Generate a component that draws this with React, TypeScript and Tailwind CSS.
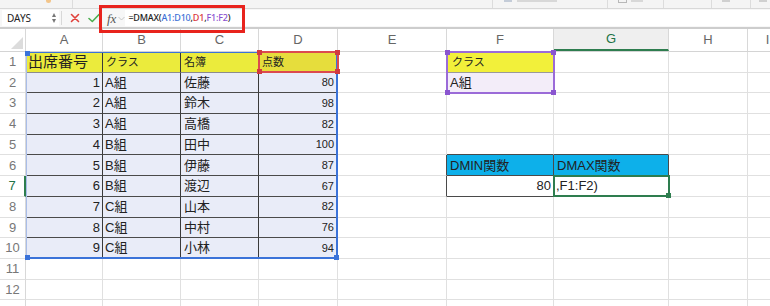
const ROWH = "h-[20.7px]";

const cols = [
    { key: "A", w: "w-[77px]" },
    { key: "B", w: "w-[78px]" },
    { key: "C", w: "w-[78px]" },
    { key: "D", w: "w-[79px]" },
    { key: "E", w: "w-[109px]" },
    { key: "F", w: "w-[107px]" },
    { key: "G", w: "w-[115px]" },
    { key: "H", w: "w-[79px]" },
    { key: "I", w: "w-[40px]" },
];

const table: [number, string, string, number][] = [
    [1, "A組", "佐藤", 80],
    [2, "A組", "鈴木", 98],
    [3, "A組", "高橋", 82],
    [4, "B組", "田中", 100],
    [5, "B組", "伊藤", 87],
    [6, "B組", "渡辺", 67],
    [7, "C組", "山本", 82],
    [8, "C組", "中村", 76],
    [9, "C組", "小林", 94],
];

interface Cell {
    text?: string;
    cls: string;
}

// cell look by row (1-based) and column key
const getCell = (r: number, c: string): Cell => {
    let bg = "";
    let br = "border-r-[#e0e0e0]";
    let bb = "border-b-[#e0e0e0]";
    let text: string | undefined;
    let extra = "justify-start pl-[2px] text-[13px]";

    if (r === 1 && "ABC".includes(c)) {
        bg = "bg-[#ebeb3c]";
        br = "border-r-[#3a3a3a]";
        bb = "border-b-[#8c8c8c]";
        if (c === "A") {
            text = "出席番号";
            extra = "justify-start pl-[2px] text-[15px]";
        }
        if (c === "B") {
            text = "クラス";
            extra = "justify-start pl-[3px] text-[11px]";
        }
        if (c === "C") {
            text = "名簿";
            extra = "justify-start pl-[3px] text-[11px]";
        }
    }
    if (r === 1 && c === "D") {
        bg = "bg-[#e6dd3c]";
        bb = "border-b-[#8c8c8c]";
        text = "点数";
        extra = "justify-start pl-[3px] text-[11px]";
    }
    if (r >= 2 && r <= 10 && "ABCD".includes(c)) {
        const row = table[r - 2];
        bg = "bg-[#e9ecf8]";
        br = "border-r-[#3a3a3a]";
        bb = "border-b-[#4a4a4a]";
        if (c === "A") {
            text = String(row[0]);
            extra = "justify-end pr-[2px] text-[13px]";
        }
        if (c === "B") text = row[1];
        if (c === "C") {
            text = row[2];
            extra = "justify-start pl-[3px] text-[13px]";
        }
        if (c === "D") {
            text = String(row[3]);
            extra = "justify-end pr-[3px] text-[11px]";
        }
    }
    if (r === 1 && c === "F") {
        bg = "bg-[#f2f03a]";
        bb = "border-b-[#9a9a9a]";
        text = "クラス";
        extra = "justify-start pl-[5px] text-[11px]";
    }
    if (r === 2 && c === "F") {
        bg = "bg-[#f3edf9]";
        text = "A組";
        extra = "justify-start pl-[3px] text-[13px]";
    }
    // DMIN / DMAX block
    if ((r === 6 || r === 7) && c === "E") br = "border-r-[#4a4a4a]";
    if (r === 5 && (c === "F" || c === "G")) bb = "border-b-[#4a4a4a]";
    if (r === 6 && (c === "F" || c === "G")) {
        bg = "bg-[#0db0ea]";
        br = "border-r-[#4a4a4a]";
        bb = "border-b-[#4a4a4a]";
        text = c === "F" ? "DMIN関数" : "DMAX関数";
        extra = "justify-start pl-[3px] text-[13px]";
    }
    if (r === 7 && c === "F") {
        br = "border-r-[#4a4a4a]";
        bb = "border-b-[#4a4a4a]";
        text = "80";
        extra = "justify-end pr-[2px] text-[13px]";
    }
    if (r === 7 && c === "G") {
        text = ",F1:F2)";
        extra = "justify-start pl-[2px] text-[13px]";
    }
    return { text, cls: `${bg} ${br} ${bb} ${extra}` };
};

const rows = Array.from({ length: 13 }, (_, i) => i + 1);

const Corner = ({ color, pos }: { color: string; pos: string }) => (
    <div className={`absolute w-[5px] h-[5px] ${color} ${pos}`} />
);

// cut-off ribbon at the very top
const TopStrip = () => (
    <div className="h-[9px] bg-[#f4f4f4] border-b border-[#d8d8d8] flex items-start">
        <div className="w-[73px] h-[8px] border-r border-[#dcdcdc] flex pl-[46px]">
            <div className="w-[5px] h-[3px] bg-[#f3c58a] rounded-b-sm" />
        </div>
        <div className="w-[420px] h-[8px] border-r border-[#dcdcdc]" />
        <div className="w-[115px] h-[8px] border-r border-[#dcdcdc] flex gap-[5px] pl-[11px]">
            <div className="w-[8px] h-[2px] bg-[#c4ccd8]" />
            <div className="w-[40px] h-[2px] bg-[#d8d8d8]" />
        </div>
        <div className="w-[56px] h-[8px] border-r border-[#dcdcdc] flex gap-[4px] pl-[10px]">
            <div className="w-[9px] h-[3px] border border-t-0 border-[#b8b8b8]" />
            <div className="w-[12px] h-[2px] bg-[#d8d8d8]" />
        </div>
        <div className="w-[48px] h-[8px] border-r border-[#dcdcdc]" />
        <div className="w-[39px] h-[8px] border-r border-[#dcdcdc] flex pl-[10px]">
            <div className="w-[8px] h-[2px] bg-[#d0d0d0]" />
        </div>
        <div className="flex-1 h-[8px] flex pl-[8px]">
            <div className="w-[8px] h-[2px] bg-[#d0d0d0]" />
        </div>
    </div>
);

const FormulaBar = () => (
    <div className="h-[18px] bg-[#f7f7f7] flex items-center font-['Noto_Sans',sans-serif] border-b-2 border-[#cdcdcd] box-content">
        <div className="ml-[2px] w-[57px] h-[16px] bg-white flex items-center justify-between pl-[5px] pr-[3px] text-[10px] text-[#222]">
            DAYS
            <div className="flex flex-col items-center gap-[2px]">
                <div className="w-0 h-0 border-l-[2.5px] border-r-[2.5px] border-b-[4px] border-l-transparent border-r-transparent border-b-[#777]" />
                <div className="w-0 h-0 border-l-[2.5px] border-r-[2.5px] border-t-[4px] border-l-transparent border-r-transparent border-t-[#777]" />
            </div>
        </div>
        <div className="w-px h-[14px] bg-[#d8d8d8] ml-[2px]" />
        <svg width="10" height="10" viewBox="0 0 10 10" className="ml-[8px]">
            <path d="M1.5 1.5 L8.5 8.5 M8.5 1.5 L1.5 8.5" stroke="#e0403a" strokeWidth="1.6" strokeLinecap="round" />
        </svg>
        <svg width="12" height="10" viewBox="0 0 12 10" className="ml-[8px]">
            <path d="M1 5.5 L4.3 8.5 L11 1.5" stroke="#4caf50" strokeWidth="1.6" fill="none" strokeLinecap="round" strokeLinejoin="round" />
        </svg>
        <span className="ml-[7px] font-['Liberation_Serif',serif] italic text-[13px] text-[#555] leading-none">fx</span>
        <svg width="7" height="5" viewBox="0 0 7 5" className="ml-[2px]">
            <path d="M0.5 1 L3.5 4 L6.5 1" stroke="#bbb" strokeWidth="0.8" fill="none" />
        </svg>
        <div className="flex-1 h-[16px] bg-white flex items-center pl-[3px] text-[9px] font-medium tracking-[-0.2px]">
            <span className="text-[#222]">=DMAX(</span>
            <span className="text-[#3b6fd6]">A1:D10</span>
            <span className="text-[#222]">,</span>
            <span className="text-[#d8343a]">D1</span>
            <span className="text-[#222]">,</span>
            <span className="text-[#8a4fcf]">F1:F2</span>
            <span className="text-[#222]">)</span>
        </div>
    </div>
);

const ColumnHeader = () => (
    <div className="flex h-[23px] bg-white border-b border-[#d4d4d4]">
        <div className="w-[26px] shrink-0 border-r border-[#d8d8d8] flex items-end justify-end p-[2px]">
            <svg width="12" height="12" viewBox="0 0 12 12">
                <path d="M12 0 L12 12 L0 12 Z" fill="#dcdcdc" />
            </svg>
        </div>
        {cols.map((c) => (
            <div
                key={c.key}
                className={`${c.w} shrink-0 flex items-center justify-center text-[13px] font-light border-r border-[#d8d8d8] ${
                    c.key === "G" ? "bg-[#efefef] text-[#217346] border-b-2 border-b-[#2e7d4f]" : "text-[#666]"
                }`}
            >
                {c.key}
            </div>
        ))}
    </div>
);

const App = () => {
    return (
        <div className="w-[770px] h-[306px] overflow-hidden bg-white font-['Liberation_Sans','Noto_Sans_CJK_JP',sans-serif] relative">
            <TopStrip />
            <FormulaBar />
            <ColumnHeader />
            <div className="relative">
                {rows.map((r) => (
                    <div key={r} className={`flex ${ROWH}`}>
                        <div
                            className={`w-[26px] shrink-0 flex items-center justify-center text-[13px] font-light border-b border-[#e0e0e0] ${
                                r === 7 ? "text-[#217346] border-r-2 border-r-[#2e7d4f]" : "text-[#777] border-r border-r-[#d8d8d8]"
                            }`}
                        >
                            {r < 13 ? r : ""}
                        </div>
                        {cols.map((c) => {
                            const cell = getCell(r, c.key);
                            return (
                                <div
                                    key={c.key}
                                    className={`${c.w} shrink-0 flex items-center border-r border-b overflow-hidden whitespace-nowrap text-[#222] ${cell.cls}`}
                                >
                                    {cell.text}
                                </div>
                            );
                        })}
                    </div>
                ))}

                {/* range highlight A1:D10 */}
                <div className="absolute left-[26px] top-0 w-[312px] h-[207px] border-r-2 border-b-2 border-l border-t border-r-[#3b73d9] border-b-[#3b73d9] border-l-[#a9bde8] border-t-[#3b73d9] pointer-events-none">
                    <Corner color="bg-[#3b73d9]" pos="-left-[2px] -top-[2px]" />
                    <Corner color="bg-[#3b73d9]" pos="-right-[3px] -bottom-[3px]" />
                    <Corner color="bg-[#3b73d9]" pos="-left-[2px] -bottom-[3px]" />
                </div>
                {/* D1 reference */}
                <div className="absolute left-[258px] -top-px w-[81px] h-[22px] border-2 border-[#dc4a4f] pointer-events-none">
                    <Corner color="bg-[#d23b40]" pos="-left-[3px] -top-[3px]" />
                    <Corner color="bg-[#d23b40]" pos="-right-[3px] -top-[3px]" />
                    <Corner color="bg-[#d23b40]" pos="-left-[3px] -bottom-[3px]" />
                    <Corner color="bg-[#d23b40]" pos="-right-[3px] -bottom-[3px]" />
                </div>
                {/* F1:F2 reference */}
                <div className="absolute left-[446px] -top-px w-[109px] h-[43px] border-2 border-[#9b6bd8] pointer-events-none">
                    <Corner color="bg-[#8a55d0]" pos="-left-[3px] -top-[3px]" />
                    <Corner color="bg-[#8a55d0]" pos="-right-[3px] -top-[3px]" />
                    <Corner color="bg-[#8a55d0]" pos="-left-[3px] -bottom-[3px]" />
                    <Corner color="bg-[#8a55d0]" pos="-right-[3px] -bottom-[3px]" />
                </div>
                {/* active cell G7 */}
                <div className="absolute left-[553px] top-[123px] w-[117px] h-[22px] border-2 border-[#2e7d4f] pointer-events-none">
                    <Corner color="bg-[#2e7d4f]" pos="-right-[3px] -bottom-[3px]" />
                </div>
            </div>

            {/* formula bar focus box */}
            <div className="absolute left-[99px] top-[5px] w-[146px] h-[28px] border-[3px] border-[#e8231d] pointer-events-none" />
        </div>
    );
};

export default App;
